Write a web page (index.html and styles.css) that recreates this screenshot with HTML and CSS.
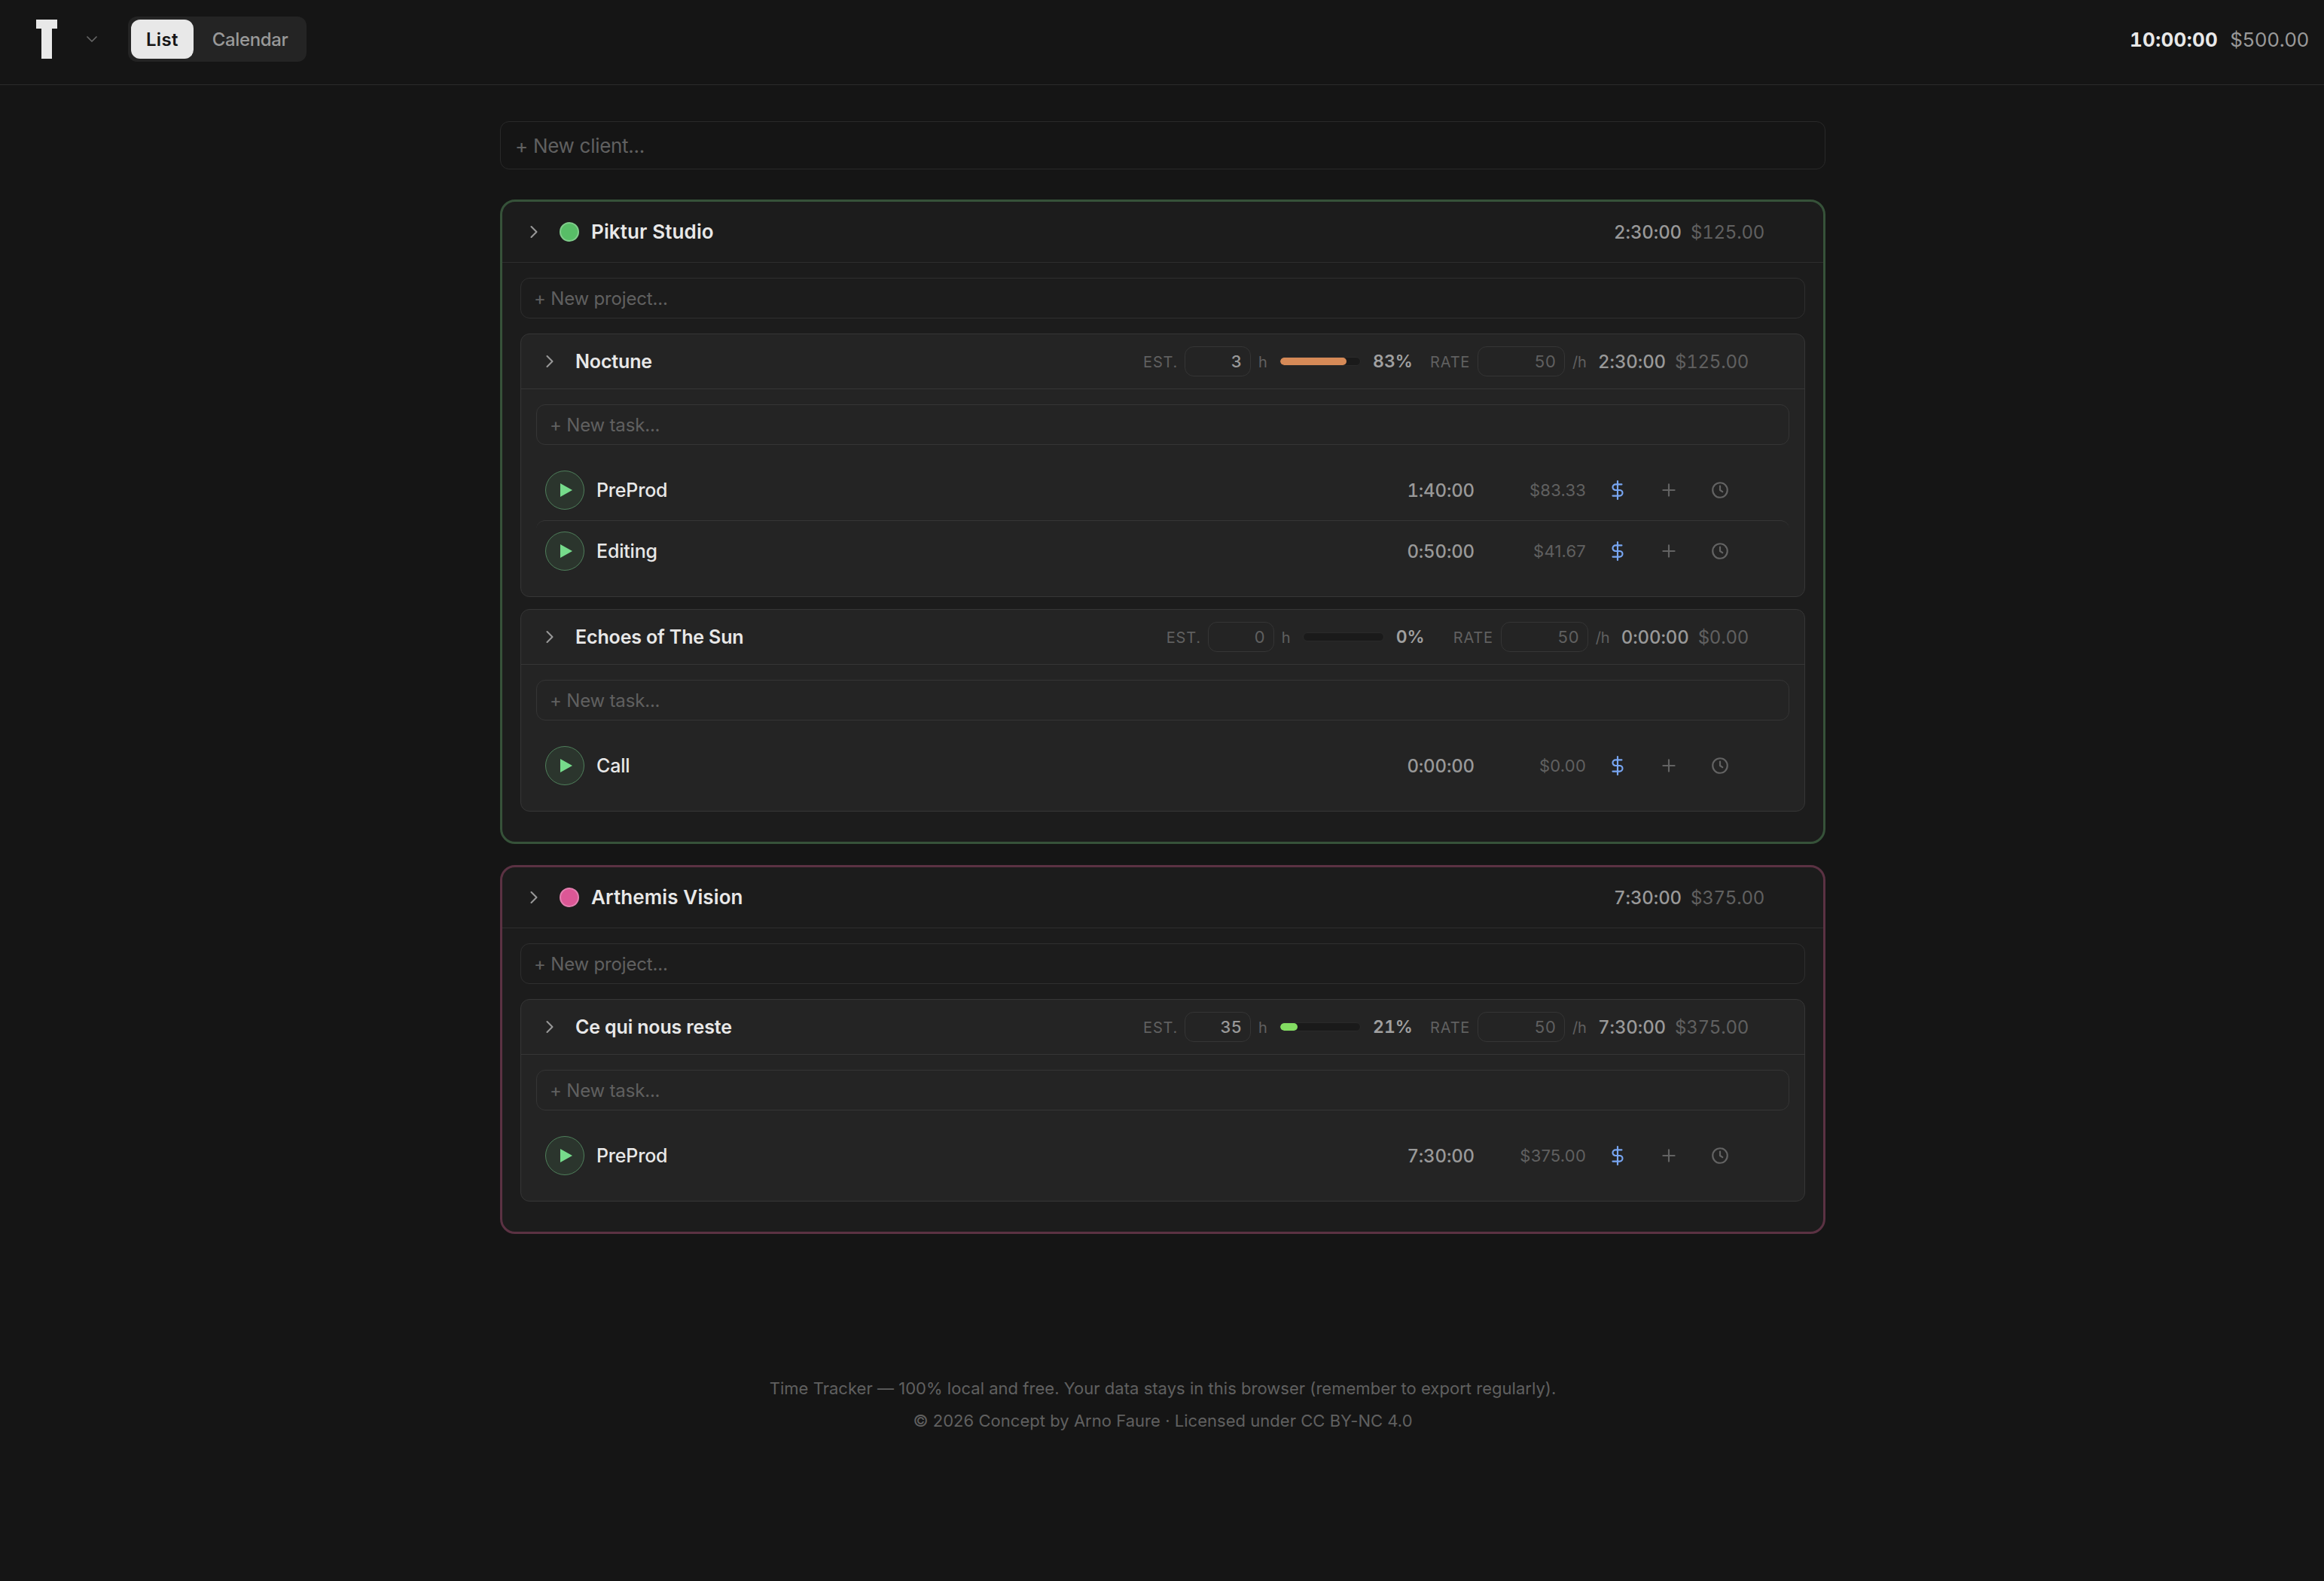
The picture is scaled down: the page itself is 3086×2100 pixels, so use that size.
FILE: index.html
```
<!DOCTYPE html>
<html lang="en">
<head>
<meta charset="utf-8">
<title>Time Tracker</title>
<link rel="stylesheet" href="styles.css">
</head>
<body>
<svg class="sprite" aria-hidden="true">
  <symbol id="chevron-right" viewBox="0 0 24 24"><path d="M9 6l6 6-6 6"/></symbol>
  <symbol id="chevron-down" viewBox="0 0 24 24"><path d="M6 9l6 6 6-6"/></symbol>
  <symbol id="dollar" viewBox="0 0 24 24"><path d="M12 1v22M17 5H9.5a3.5 3.5 0 0 0 0 7h5a3.5 3.5 0 0 1 0 7H6"/></symbol>
  <symbol id="plus" viewBox="0 0 24 24"><path d="M12 5v14M5 12h14"/></symbol>
  <symbol id="clock" viewBox="0 0 24 24"><circle cx="12" cy="12" r="9"/><path d="M12 7v5l3 2"/></symbol>
  <symbol id="play" viewBox="0 0 16 18"><path d="M0 0l16 9-16 9z"/></symbol>
</svg>

<header class="topbar">
  <svg class="logo" viewBox="0 0 28 52" aria-label="Time Tracker"><path d="M0 0h28v12h-7v40H7V12H0z"/></svg>
  <svg class="icon menu-chevron"><use href="#chevron-down"/></svg>
  <nav class="views">
    <button class="view view-active">List</button>
    <button class="view">Calendar</button>
  </nav>
  <div class="grand-total">
    <span class="grand-time">10:00:00</span>
    <span class="grand-amount">$500.00</span>
  </div>
</header>

<main class="page">
  <div class="field field-client">+ New client...</div>

  <section class="client client-green">
    <div class="client-head">
      <svg class="icon chevron"><use href="#chevron-right"/></svg>
      <span class="dot"></span>
      <h2 class="client-name">Piktur Studio</h2>
      <span class="time">2:30:00</span>
      <span class="amount">$125.00</span>
    </div>
    <div class="client-body">
      <div class="field field-project">+ New project...</div>

      <article class="project">
        <div class="project-head">
          <svg class="icon chevron"><use href="#chevron-right"/></svg>
          <h3 class="project-name">Noctune</h3>
          <span class="label label-est">EST.</span>
          <span class="num num-est">3</span>
          <span class="unit unit-est">h</span>
          <span class="bar"><span class="bar-fill bar-orange" style="width:83.3%"></span></span>
          <span class="percent">83%</span>
          <span class="label label-rate">RATE</span>
          <span class="num num-rate num-empty">50</span>
          <span class="unit unit-rate">/h</span>
          <span class="time">2:30:00</span>
          <span class="amount">$125.00</span>
        </div>
        <div class="project-body">
          <div class="field field-task">+ New task...</div>
          <div class="tasks">
            <div class="task">
              <button class="play"><svg><use href="#play"/></svg></button>
              <span class="task-name">PreProd</span>
              <span class="task-time">1:40:00</span>
              <span class="task-amount">$83.33</span>
              <button class="action action-billable"><svg class="icon"><use href="#dollar"/></svg></button>
              <button class="action"><svg class="icon"><use href="#plus"/></svg></button>
              <button class="action"><svg class="icon"><use href="#clock"/></svg></button>
            </div>
            <div class="task">
              <button class="play"><svg><use href="#play"/></svg></button>
              <span class="task-name">Editing</span>
              <span class="task-time">0:50:00</span>
              <span class="task-amount">$41.67</span>
              <button class="action action-billable"><svg class="icon"><use href="#dollar"/></svg></button>
              <button class="action"><svg class="icon"><use href="#plus"/></svg></button>
              <button class="action"><svg class="icon"><use href="#clock"/></svg></button>
            </div>
          </div>
        </div>
      </article>

      <article class="project">
        <div class="project-head">
          <svg class="icon chevron"><use href="#chevron-right"/></svg>
          <h3 class="project-name">Echoes of The Sun</h3>
          <span class="label label-est">EST.</span>
          <span class="num num-est num-empty">0</span>
          <span class="unit unit-est">h</span>
          <span class="bar"></span>
          <span class="percent">0%</span>
          <span class="label label-rate">RATE</span>
          <span class="num num-rate num-empty">50</span>
          <span class="unit unit-rate">/h</span>
          <span class="time">0:00:00</span>
          <span class="amount">$0.00</span>
        </div>
        <div class="project-body">
          <div class="field field-task">+ New task...</div>
          <div class="tasks">
            <div class="task">
              <button class="play"><svg><use href="#play"/></svg></button>
              <span class="task-name">Call</span>
              <span class="task-time">0:00:00</span>
              <span class="task-amount">$0.00</span>
              <button class="action action-billable"><svg class="icon"><use href="#dollar"/></svg></button>
              <button class="action"><svg class="icon"><use href="#plus"/></svg></button>
              <button class="action"><svg class="icon"><use href="#clock"/></svg></button>
            </div>
          </div>
        </div>
      </article>
    </div>
  </section>

  <section class="client client-pink">
    <div class="client-head">
      <svg class="icon chevron"><use href="#chevron-right"/></svg>
      <span class="dot"></span>
      <h2 class="client-name">Arthemis Vision</h2>
      <span class="time">7:30:00</span>
      <span class="amount">$375.00</span>
    </div>
    <div class="client-body">
      <div class="field field-project">+ New project...</div>

      <article class="project">
        <div class="project-head">
          <svg class="icon chevron"><use href="#chevron-right"/></svg>
          <h3 class="project-name">Ce qui nous reste</h3>
          <span class="label label-est">EST.</span>
          <span class="num num-est">35</span>
          <span class="unit unit-est">h</span>
          <span class="bar"><span class="bar-fill bar-green" style="width:21.4%"></span></span>
          <span class="percent">21%</span>
          <span class="label label-rate">RATE</span>
          <span class="num num-rate num-empty">50</span>
          <span class="unit unit-rate">/h</span>
          <span class="time">7:30:00</span>
          <span class="amount">$375.00</span>
        </div>
        <div class="project-body">
          <div class="field field-task">+ New task...</div>
          <div class="tasks">
            <div class="task">
              <button class="play"><svg><use href="#play"/></svg></button>
              <span class="task-name">PreProd</span>
              <span class="task-time">7:30:00</span>
              <span class="task-amount">$375.00</span>
              <button class="action action-billable"><svg class="icon"><use href="#dollar"/></svg></button>
              <button class="action"><svg class="icon"><use href="#plus"/></svg></button>
              <button class="action"><svg class="icon"><use href="#clock"/></svg></button>
            </div>
          </div>
        </div>
      </article>
    </div>
  </section>
</main>

<footer class="footer">
  <p>Time Tracker — 100% local and free. Your data stays in this browser (remember to export regularly).</p>
  <p>© 2026 Concept by Arno Faure · Licensed under CC BY-NC 4.0</p>
</footer>
</body>
</html>
```
FILE: styles.css
```
:root {
  --bg: #151515;
  --card: #1c1c1c;
  --panel: #242424;
  --line: #363636;
  --text: #e8e8e8;
  --muted: #999999;
  --faint: #606060;
}

* { box-sizing: border-box; }

body {
  margin: 0;
  min-height: 100vh;
  background: var(--bg);
  color: var(--text);
  font-family: Inter, "Liberation Sans", sans-serif;
  font-size: 24px;
}

h2, h3, p { margin: 0; }

button {
  border: 0;
  padding: 0;
  background: none;
  color: inherit;
  font: inherit;
}

.sprite { display: none; }

.icon {
  display: block;
  width: 26px;
  height: 26px;
  fill: none;
  stroke: currentColor;
  stroke-width: 2;
  stroke-linecap: round;
  stroke-linejoin: round;
}

/* Top bar */
.topbar {
  display: flex;
  align-items: center;
  padding: 22px 20px 30px 48px;
  border-bottom: 1px solid #2a2a2a;
}

.logo {
  width: 28px;
  height: 52px;
  fill: var(--text);
}

.menu-chevron {
  width: 24px;
  height: 24px;
  margin: 0 36px 0 34px;
  color: #666666;
  stroke-width: 1.7;
}

.views {
  display: flex;
  gap: 4px;
  height: 60px;
  padding: 4px;
  border-radius: 12px;
  background: var(--panel);
}

.view {
  padding: 0 21px;
  border-radius: 12px;
  color: var(--muted);
  font-weight: 500;
  letter-spacing: -0.35px;
}

.view-active {
  padding: 0 20px;
  background: var(--text);
  color: #151515;
  font-weight: 600;
  letter-spacing: 0.3px;
}

.grand-total {
  display: flex;
  gap: 16px;
  margin-left: auto;
  font-size: 26px;
  font-variant-numeric: tabular-nums;
}

.grand-time { font-weight: 700; letter-spacing: 0.3px; }
.grand-amount { color: var(--muted); letter-spacing: -0.45px; }

/* Entry fields */
.page {
  width: 1760px;
  margin: 48px auto 0;
  position: relative;
  left: 1px;
}

.field {
  display: flex;
  align-items: center;
  height: 54px;
  padding: 0 17px;
  border: 1px solid var(--line);
  border-radius: 12px;
  color: var(--faint);
  letter-spacing: -0.18px;
}

.field-client {
  height: 64px;
  padding: 0 19px;
  margin-bottom: 40px;
  border-color: #292929;
  font-size: 26px;
  letter-spacing: -0.3px;
}

.field-project { border-color: #2f2f2f; margin-bottom: 20px; }
.field-task { border-color: #353535; }

/* Client card */
.client {
  border: 3px solid;
  border-radius: 20px;
  background: var(--card);
}

.client + .client { margin-top: 28px; }
.client-green { border-color: #365239; }
.client-pink { border-color: #5b3243; }

.client-head {
  display: flex;
  align-items: center;
  height: 81px;
  padding: 0 78px 0 28px;
  border-bottom: 1px solid #2e2e2e;
}

.chevron {
  flex: none;
  width: 28px;
  height: 28px;
  margin-right: 20px;
  color: var(--muted);
  stroke-width: 1.8;
}

.dot {
  width: 26px;
  height: 26px;
  margin-right: 16px;
  border: 2px solid;
  border-radius: 50%;
}

.client-green .dot { background: #58bd67; border-color: #80cc8b; }
.client-pink .dot { background: #dc5796; border-color: #e380b0; }

.client-name {
  flex: 1;
  padding-bottom: 1px;
  font-size: 26px;
  font-weight: 600;
  letter-spacing: 0.12px;
}

.time {
  width: 90px;
  color: var(--muted);
  font-weight: 500;
  font-variant-numeric: tabular-nums;
  letter-spacing: -0.1px;
  white-space: nowrap;
}

.amount {
  margin-left: 12px;
  color: #606060;
  font-variant-numeric: tabular-nums;
  letter-spacing: -0.25px;
}

.client-body { padding: 20px 24px 40px; }

/* Project */
.project {
  border: 1px solid var(--line);
  border-radius: 12px;
  background: var(--panel);
}

.project + .project { margin-top: 16px; }

.project-head {
  display: flex;
  align-items: center;
  height: 73px;
  padding: 0 74px 0 24px;
  border-bottom: 1px solid #363636;
}

.project-name {
  flex: 1;
  font-size: 25px;
  font-weight: 600;
  letter-spacing: -0.15px;
}

.label {
  padding-top: 1px;
  color: var(--faint);
  font-size: 20px;
  letter-spacing: 0.8px;
}

.label-est { width: 55px; }
.label-rate { width: 63px; }

.num {
  display: flex;
  align-items: center;
  justify-content: flex-end;
  height: 40px;
  padding: 0 11px;
  border: 1px solid #353535;
  border-radius: 12px;
  color: var(--muted);
  font-size: 22px;
  font-weight: 500;
  font-variant-numeric: tabular-nums;
}

.num-est { width: 88px; }
.num-rate { width: 116px; }
.num-empty { color: var(--faint); font-weight: 400; }

.unit {
  margin-left: 10px;
  padding-top: 1px;
  color: var(--faint);
  font-size: 20px;
  letter-spacing: -0.3px;
}

.unit-est { width: 12px; }
.unit-rate { width: 18px; margin-right: 16px; }

.bar {
  width: 108px;
  height: 12px;
  margin: 0 16px;
  overflow: hidden;
  border: 1px solid #2a2a2a;
  border-radius: 6px;
  background: #1a1a1a;
}

.bar-fill {
  display: block;
  height: 100%;
  border-radius: 5px;
}

.bar-orange { background: #d68a57; }
.bar-green { background: #83dc62; }

.percent {
  width: 76px;
  color: #a0a0a0;
  font-size: 23px;
  font-weight: 600;
  font-variant-numeric: tabular-nums;
}

.project-body { padding: 20px; }

/* Tasks */
.tasks { margin-top: 20px; }

.task {
  display: flex;
  align-items: center;
  gap: 16px;
  padding: 14px 66px 14px 12px;
  border-radius: 12px;
}

.task + .task { border-top: 1px solid #363636; }

.play {
  display: grid;
  place-items: center;
  width: 52px;
  height: 52px;
  padding-left: 3px;
  border: 1px solid #4f7f5b;
  border-radius: 50%;
  background: #2b352d;
}

.play svg {
  width: 16px;
  height: 18px;
  fill: #76db8b;
}

.task-name {
  flex: 1;
  font-size: 25px;
  font-weight: 500;
  letter-spacing: -0.2px;
}

.task-time {
  color: var(--muted);
  font-weight: 500;
  font-variant-numeric: tabular-nums;
  letter-spacing: -0.15px;
}

.task-amount {
  width: 132px;
  color: var(--faint);
  font-size: 22px;
  letter-spacing: 0.2px;
  text-align: right;
}

.action {
  display: grid;
  place-items: center;
  width: 52px;
  height: 52px;
  color: #636363;
}

.action-billable { color: #78a6f2; }

/* Footer */
.footer {
  margin-top: 184px;
  padding-left: 2px;
  color: var(--faint);
  font-size: 22px;
  line-height: 43px;
  letter-spacing: 0.03px;
  text-align: center;
}
```
